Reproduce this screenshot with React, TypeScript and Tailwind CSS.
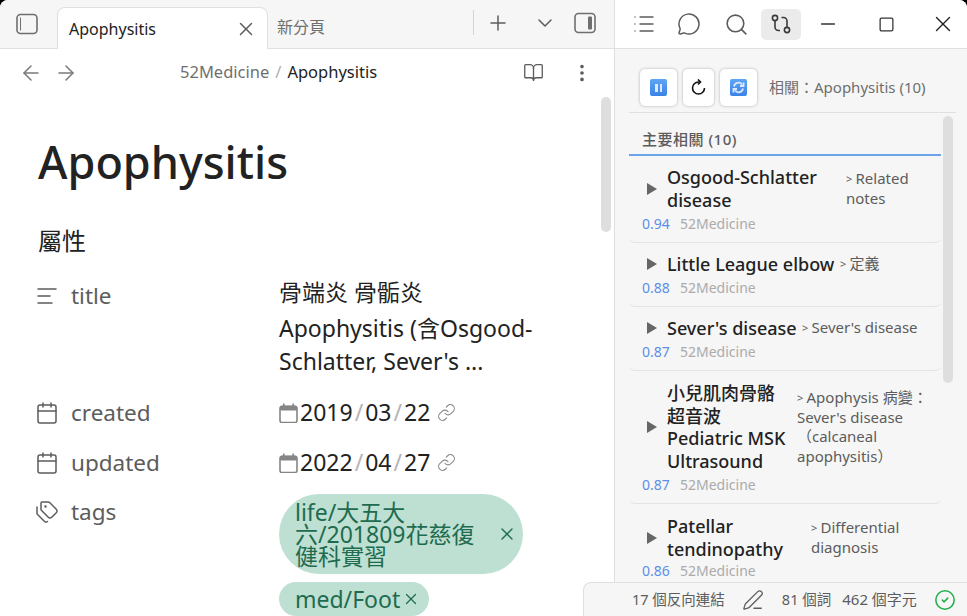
import { BookOpen, Calendar, ChevronDown, EllipsisVertical, Link, List, MessageCircle, Minus, PenLine, Plus, Search, Square, Tags, Text, X, ArrowLeft, ArrowRight, CircleCheck } from "lucide-react";

const font = "font-['Noto_Sans','Noto_Sans_CJK_TC',sans-serif]";

const PanelIcon = ({ right }: { right?: boolean }) => (
  <svg width="24" height="24" viewBox="0 0 24 24" fill="none" stroke="#6f6f6f" strokeWidth="1.6">
    <rect x="2" y="2.5" width="20" height="19" rx="3.5" />
    {right ? (
      <rect x="15" y="5.5" width="4" height="13" rx="1" fill="#6f6f6f" stroke="none" />
    ) : (
      <rect x="5" y="5.5" width="1" height="13" fill="#6f6f6f" stroke="none" />
    )}
  </svg>
);

const RouteIcon = () => (
  <svg width="20" height="20" viewBox="0 0 20 20" fill="none" stroke="#3a3a3a" strokeWidth="1.6">
    <circle cx="4" cy="4" r="2.6" />
    <circle cx="16" cy="16" r="2.6" />
    <path d="M4 6.6v6.4a3.5 3.5 0 0 0 3.5 3.5h1.5" />
    <path d="M10.5 3.5h2a3.5 3.5 0 0 1 3.5 3.5v6.4" />
  </svg>
);

const BlueButton = ({ children }: { children: React.ReactNode }) => (
  <div className="flex h-[37px] w-[37px] items-center justify-center rounded-[5px] bg-white shadow-[0_0_3px_rgba(0,0,0,0.3)]">
    <div className="flex h-[17px] w-[17px] items-center justify-center rounded-[2px] bg-gradient-to-b from-[#5fa5f5] to-[#3b82e8]">
      {children}
    </div>
  </div>
);

const Prop = ({ icon, name, children, className }: { icon: React.ReactNode; name: string; children: React.ReactNode; className?: string }) => (
  <div className={`flex ${className ?? ""}`}>
    <div className="flex h-[33px] w-[241px] shrink-0 items-center gap-[12px] text-[22.5px] text-[#5c5c5c]">
      <div className="-ml-[3px]">{icon}</div>
      <span>{name}</span>
    </div>
    <div className="min-w-0 flex-1">{children}</div>
  </div>
);

const DateValue = ({ value }: { value: string }) => {
  const [y, m, d] = value.split("/");
  return (
    <div className="flex h-[33px] items-center text-[#222]">
      <svg width="20" height="20" viewBox="0 0 20 20" className="mr-px">
        <rect x="1" y="3.5" width="17" height="16" rx="2" fill="none" stroke="#858585" strokeWidth="1.6" />
        <rect x="1" y="2.5" width="17" height="5" rx="1.5" fill="#858585" />
        <rect x="4" y="0.5" width="1.6" height="3" fill="#858585" />
        <rect x="13.4" y="0.5" width="1.6" height="3" fill="#858585" />
      </svg>
      <span>{y}</span>
      <span className="mx-[2px] text-[#b5b5b5]">/</span>
      <span>{m}</span>
      <span className="mx-[2px] text-[#b5b5b5]">/</span>
      <span>{d}</span>
      <Link size={19} strokeWidth={1.4} className="ml-[7px] text-[#8a8a8a]" />
    </div>
  );
};

type Note = { title: string[]; titleW: string; snippet: string[]; score: string; h: string; border?: boolean; scoreGap?: string };

const notes: Note[] = [
  { title: ["Osgood-Schlatter", "disease"], titleW: "w-[179px]", snippet: ["Related", "notes"], score: "0.94", h: "h-[87px]", border: true },
  { title: ["Little League elbow"], titleW: "w-[173px]", snippet: ["定義"], score: "0.88", h: "h-[64px]", border: true },
  { title: ["Sever's disease"], titleW: "w-[135px]", snippet: ["Sever's disease"], score: "0.87", h: "h-[64px]", border: true },
  { title: ["小兒肌肉骨骼", "超音波", "Pediatric MSK", "Ultrasound"], titleW: "w-[130px]", snippet: ["Apophysis 病變：", "Sever's disease", "（calcaneal", "apophysitis）"], score: "0.87", h: "h-[133px]", border: true },
  { title: ["Patellar", "tendinopathy"], titleW: "w-[144px]", snippet: ["Differential", "diagnosis"], score: "0.86", h: "h-[85px]", scoreGap: "mt-[1px]" },
];

const NoteItem = ({ note }: { note: Note }) => (
  <div className={`flex ${note.h} flex-col justify-end rounded-b-[6px] pb-[10px] pl-[13px] ${note.border ? "border-b border-[#e3e3e3]" : ""}`}>
    <div className="flex items-center">
      <svg width="10" height="12" viewBox="0 0 10 12" className="ml-[5px] mr-[10px] shrink-0">
        <path d="M0 0L10 6L0 12Z" fill="#666666" />
      </svg>
      <div className={`${note.titleW} shrink-0 text-[18px] font-medium leading-[22.5px] text-[#222]`}>
        {note.title.map((t) => (
          <div key={t} className="whitespace-nowrap">{t}</div>
        ))}
      </div>
      <div className="text-[15px] leading-[19.5px] text-[#5c5c5c]">
        {note.snippet.map((t, i) => (
          <div key={t} className="flex items-center whitespace-nowrap">
            {i === 0 && <span className="w-[9.5px] text-[11px]">&gt;</span>}
            <span>{t}</span>
          </div>
        ))}
      </div>
    </div>
    <div className={`${note.scoreGap ?? "mt-[3px]"} flex h-[18px] items-center gap-[16px] text-[14px]`}>
      <span className="w-[22px] text-[#5b8fe8]">{note.score}</span>
      <span className="text-[#ababab]">52Medicine</span>
    </div>
  </div>
);

export default function App() {
  return (
    <div className={`${font} relative flex h-screen w-full overflow-hidden bg-black`}>
      {/* left pane */}
      <div className="flex h-full w-[615px] shrink-0 flex-col overflow-hidden rounded-tl-[8px] border-r border-[#e0e0e0] bg-white">
        <div className="flex h-[49px] shrink-0 items-end border-b border-[#e0e0e0] bg-[#f6f6f6]">
          <div className="flex h-full w-[57px] items-center justify-center pb-[1px] pr-[4px]">
            <PanelIcon />
          </div>
          <div className="-mb-px flex h-[42px] w-[211px] items-center justify-between rounded-t-[8px] border border-b-0 border-[#e0e0e0] bg-white pl-[11px] pr-[10px] text-[16px] text-[#222]">
            <span>Apophysitis</span>
            <X size={22} strokeWidth={1.6} className="text-[#5c5c5c]" />
          </div>
          <div className="flex h-[42px] w-[205px] items-center pl-[9px] text-[16px] text-[#6f6f6f]">新分頁</div>
          <div className="flex h-full flex-1 items-center pb-[3px]">
            <div className="h-[25px] w-px bg-[#d4d4d4]" />
            <Plus size={24} strokeWidth={1.5} className="ml-[12px] text-[#5c5c5c]" />
            <ChevronDown size={24} strokeWidth={1.5} className="ml-[23px] text-[#5c5c5c]" />
            <div className="ml-[16px]"><PanelIcon right /></div>
          </div>
        </div>

        <div className="flex h-[47px] shrink-0 items-center text-[16.5px]">
          <ArrowLeft size={24} strokeWidth={1.5} className="ml-[19px] text-[#7a7a7a]" />
          <ArrowRight size={24} strokeWidth={1.5} className="ml-[11px] text-[#7a7a7a]" />
          <div className="ml-[102px] flex gap-[6px]">
            <span className="text-[#6f6f6f]">52Medicine</span>
            <span className="text-[#b0b0b0]">/</span>
            <span className="text-[#222]">Apophysitis</span>
          </div>
          <BookOpen size={21} strokeWidth={1.5} className="ml-[146px] text-[#5c5c5c]" />
          <EllipsisVertical size={22} strokeWidth={2} className="ml-[27px] text-[#5c5c5c]" />
        </div>

        <div className="flex min-h-0 flex-1">
          <div className="min-w-0 w-[601px] shrink-0 pl-[38px] pr-[60px] pt-[36px] text-[23px] leading-[33px]">
            <h1 className="text-[45px] font-medium leading-[60px] text-[#222]">Apophysitis</h1>
            <div className="mt-[32px] text-[24px] text-[#222]">屬性</div>
            <Prop className="mt-[22px]" icon={<Text size={24} strokeWidth={1.5} />} name="title">
              <div className="text-[#222]">
                <div className="-mt-[3px] mb-[3px]">骨端炎 骨骺炎</div>
                <div>Apophysitis (含Osgood-</div>
                <div>Schlatter, Sever's ...</div>
              </div>
            </Prop>
            <Prop className="mt-[18px]" icon={<Calendar size={24} strokeWidth={1.5} />} name="created">
              <DateValue value="2019/03/22" />
            </Prop>
            <Prop className="mt-[17px]" icon={<Calendar size={24} strokeWidth={1.5} />} name="updated">
              <DateValue value="2022/04/27" />
            </Prop>
            <Prop className="mt-[16px]" icon={<Tags size={24} strokeWidth={1.5} />} name="tags">
              <div className="-mt-[1px] flex flex-col items-start gap-[8px] text-[#1f6b4f]">
                <div className="flex h-[80px] w-[244px] items-center rounded-full bg-[#bee0d2] pl-[16px]">
                  <div className="w-[190px] leading-[22px]">life/大五大六/201809花慈復健科實習</div>
                  <X size={20} strokeWidth={1.6} className="ml-[12px]" />
                </div>
                <div className="flex h-[34px] items-center rounded-full bg-[#bee0d2] pl-[16px] pr-[9px]">
                  <span>med/Foot</span>
                  <X size={18} strokeWidth={1.6} className="ml-[2px]" />
                </div>
              </div>
            </Prop>
          </div>
          <div className="ml-0 mt-[1px] h-[135px] w-[10px] rounded-full bg-[#dedede]" />
        </div>
      </div>

      {/* right pane */}
      <div className="flex h-full min-w-0 flex-1 flex-col overflow-hidden rounded-tr-[8px] bg-[#f6f6f6]">
        <div className="flex h-[49px] shrink-0 items-center border-b border-[#e0e0e0] bg-white text-[#5c5c5c]">
          <List size={24} strokeWidth={1.4} className="ml-[17px]" />
          <MessageCircle size={24} strokeWidth={1.5} className="ml-[21px]" />
          <Search size={25} strokeWidth={1.5} className="ml-[23px]" />
          <div className="ml-[12px] flex h-[31px] w-[40px] items-center justify-center rounded-[5px] bg-[#ebebeb]">
            <RouteIcon />
          </div>
          <Minus size={22} strokeWidth={1.4} className="ml-[16px] text-[#333]" />
          <Square size={17} strokeWidth={1.8} className="ml-[39px] rounded-none text-[#333]" />
          <X size={26} strokeWidth={1.3} className="ml-[34.5px] text-[#222]" />
        </div>

        <div className="mx-[14px] flex h-[64px] w-[327px] shrink-0 items-center gap-[6px] border-b border-[#e0e0e0] pb-[1px] pl-[11px] pt-[15px]">
          <BlueButton>
            <div className="flex gap-[2px]">
              <div className="h-[8px] w-[2.5px] bg-[#dbe9fb]" />
              <div className="h-[8px] w-[2.5px] bg-[#dbe9fb]" />
            </div>
          </BlueButton>
          <div className="flex h-[37px] w-[31px] items-center justify-center rounded-[5px] bg-white shadow-[0_0_3px_rgba(0,0,0,0.3)]">
            <svg width="16" height="18" viewBox="0 0 16 18" fill="none" stroke="#111" strokeWidth="1.6">
              <path d="M13.5 9a6 6 0 1 1-6-6h1" />
              <path d="M7 0.5L9.5 3L7 5.5" />
            </svg>
          </div>
          <BlueButton>
            <svg width="13" height="13" viewBox="0 0 13 13" fill="none" stroke="#dbe9fb" strokeWidth="1.8">
              <path d="M2 5.5A4.5 4.5 0 0 1 10 3.5" />
              <path d="M11 7.5A4.5 4.5 0 0 1 3 9.5" />
              <path d="M8 5h3.5V1.5" />
              <path d="M5 8H1.5v3.5" />
            </svg>
          </BlueButton>
          <span className="ml-[6px] text-[15px] text-[#6f6f6f]">相關：Apophysitis (10)</span>
        </div>

        <div className="flex min-h-0 flex-1">
          <div className="ml-[14px] w-[312px] shrink-0">
            <div className="flex h-[43px] items-end border-b-2 border-[#6ba3e8] pb-[4px] pl-[13px] text-[15px] font-medium tracking-[0.5px] text-[#5c5c5c]">
              主要相關 (10)
            </div>
            {notes.map((n) => (
              <NoteItem key={n.score + n.title[0]} note={n} />
            ))}
          </div>
          <div className="ml-[2px] mt-[3px] h-[267px] w-[10px] rounded-full bg-[#dedede]" />
        </div>
      </div>

      {/* status bar */}
      <div className="absolute bottom-0 right-0 flex h-[34px] w-[384px] items-center rounded-tl-[8px] border-l border-t border-[#e0e0e0] bg-[#f6f6f6] pl-[48px] text-[14.5px] text-[#5c5c5c]">
        <span>17 個反向連結</span>
        <PenLine size={22} strokeWidth={1.4} className="ml-[17px]" />
        <span className="ml-[18px]">81 個詞</span>
        <span className="ml-[11px] text-[15px]">462 個字元</span>
        <CircleCheck size={22} strokeWidth={1.7} className="ml-[17px] text-[#22b14c]" />
      </div>
    </div>
  );
}
